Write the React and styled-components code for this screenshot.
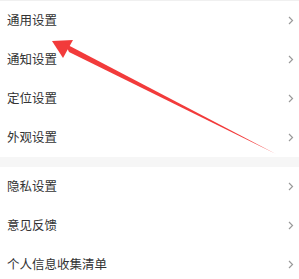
import React from "react";
import styled, { createGlobalStyle } from "styled-components";

const Global = createGlobalStyle`
  html, body { margin: 0; padding: 0; background: #fff; }
  body { font-family: "Noto Sans CJK SC", "Noto Sans", sans-serif; }
`;

const Page = styled.div`
  position: relative;
  width: 299px;
  height: 279px;
  overflow: hidden;
  background: #fff;
  border-top: 1px solid #f0f0f0;
  box-sizing: border-box;
`;

const Group = styled.div`
  display: flex;
  flex-direction: column;
`;

const Gap = styled.div`
  height: 10px;
  background: #f6f6f6;
`;

const Row = styled.div`
  display: flex;
  align-items: center;
  justify-content: space-between;
  height: 39px;
  padding: 0 5px 0 7px;
`;

const Label = styled.span`
  font-size: 12.5px;
  color: #333;
  line-height: 1;
`;

const Chevron = () => (
  <svg width="6" height="9" viewBox="0 0 6 9">
    <path d="M1 1 L4.5 4.5 L1 8" fill="none" stroke="#9a9a9a" strokeWidth="1.2" />
  </svg>
);

const ArrowLayer = styled.svg`
  position: absolute;
  left: 0;
  top: 0;
  pointer-events: none;
`;

const Item = ({ label }) => (
  <Row>
    <Label>{label}</Label>
    <Chevron />
  </Row>
);

export default function App() {
  return (
    <>
      <Global />
      <Page>
        <Group>
          {["通用设置", "通知设置", "定位设置", "外观设置"].map((l) => (
            <Item key={l} label={l} />
          ))}
        </Group>
        <Gap />
        <Group>
          {["隐私设置", "意见反馈", "个人信息收集清单"].map((l) => (
            <Item key={l} label={l} />
          ))}
        </Group>
        <ArrowLayer width="299" height="279" viewBox="0 0 299 279">
          <polygon points="52,40 73,39 63,57" fill="#f23b3b" />
          <polygon points="65,42.5 69,51 276,153" fill="#f23b3b" />
        </ArrowLayer>
      </Page>
    </>
  );
}
